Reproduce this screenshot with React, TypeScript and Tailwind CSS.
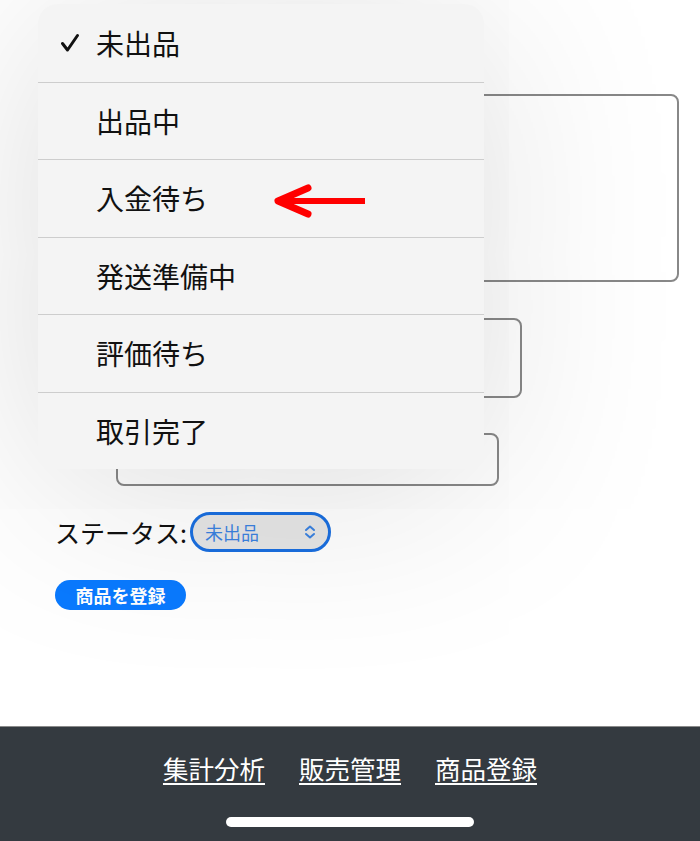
import React from "react";

const FONT = { fontFamily: '"Noto Sans CJK JP", "Noto Sans", "Liberation Sans", sans-serif' };

const items = ["未出品", "出品中", "入金待ち", "発送準備中", "評価待ち", "取引完了"];

export default function App() {
  return (
    <div className="relative w-[700px] h-[841px] overflow-hidden bg-white flex flex-col" style={FONT}>
      <main className="flex-1 flex flex-col px-[55px] pt-[94px]">
        <div className="ml-[62px] w-[562px] h-[188px] rounded-[8px] border-2 border-[#888]" />
        <div className="mt-[36px] ml-[0px] w-[467px] h-[80px] rounded-[8px] border-2 border-[#888]" />
        <div className="mt-[35px] ml-[61px] w-[383px] h-[53px] rounded-[8px] border-2 border-[#888]" />
        <div className="mt-[26px] flex items-center h-[40px]">
          <span className="text-[25px] text-[#111] leading-none">ステータス:</span>
          <div className="ml-[3px] w-[141px] h-[40px] rounded-full border-[3px] border-[#1a6fe0] bg-[#e6e6e6] flex items-center justify-between pl-[12px] pr-[11px]">
            <span className="text-[18px] text-[#3b82e0] leading-none">未出品</span>
            <svg width="14" height="16" viewBox="0 0 14 16" fill="none" stroke="#3b82e0" strokeWidth="2" strokeLinecap="round" strokeLinejoin="round">
              <path d="M3 6 L7 2.5 L11 6" />
              <path d="M3 10 L7 13.5 L11 10" />
            </svg>
          </div>
        </div>
        <div className="mt-[28px]">
          <button className="w-[131px] h-[30px] rounded-full bg-[#0a7aff] text-white text-[18px] font-bold leading-none flex items-center justify-center">
            商品を登録
          </button>
        </div>
      </main>

      <footer className="h-[115px] bg-[#343a40] border-t border-[#8a8a8a] flex flex-col items-center">
        <nav className="mt-[26px] flex gap-[34px] text-white text-[25.5px] leading-[30px]">
          <a className="underline underline-offset-[4px] decoration-[2px]">集計分析</a>
          <a className="underline underline-offset-[4px] decoration-[2px]">販売管理</a>
          <a className="underline underline-offset-[4px] decoration-[2px]">商品登録</a>
        </nav>
        <div className="mt-[34px] w-[248px] h-[10px] rounded-full bg-white" />
      </footer>

      <div className="absolute top-[4px] left-[38px] w-[446px] rounded-[20px] bg-[#f4f4f4] shadow-[0_20px_200px_rgba(0,0,0,0.14)] overflow-hidden">
        {items.map((t, i) => (
          <div
            key={t}
            className={`h-[77.5px] flex items-center ${i > 0 ? "border-t border-[#cdcdcd]" : ""}`}
          >
            <div className="w-[58px] flex justify-end pr-[16px]">
              {i === 0 && (
                <svg width="20" height="20" viewBox="0 0 20 20" fill="none" stroke="#111" strokeWidth="3" strokeLinecap="round" strokeLinejoin="round">
                  <path d="M2.5 10.5 L7.5 17 L17.5 2.5" />
                </svg>
              )}
            </div>
            <span className="text-[28px] text-[#111] leading-none">{t}</span>
          </div>
        ))}
      </div>

      <svg className="absolute left-[270px] top-[183px]" width="100" height="36" viewBox="0 0 100 36" fill="none">
        <path d="M95 18 L12 18" stroke="#ff0000" strokeWidth="6" />
        <path d="M38 5 L8 18 L38 31" stroke="#ff0000" strokeWidth="7" strokeLinecap="round" strokeLinejoin="round" />
      </svg>
    </div>
  );
}
